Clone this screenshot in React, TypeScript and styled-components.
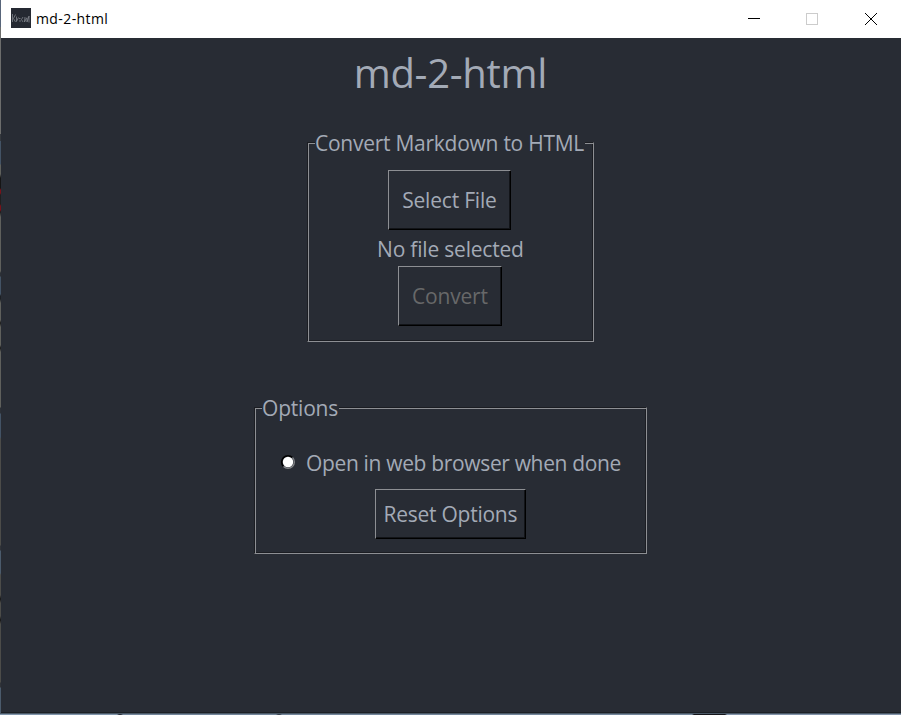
import React from "react";
import styled, { createGlobalStyle } from "styled-components";

const ink = "#a3aab6";
const light = "#8d8f93";
const shade = "#1b1d22";

const GlobalStyle = createGlobalStyle`
  * { box-sizing: border-box; }
  body { margin: 0; background: #282c34; overflow: hidden; }
`;

const Screen = styled.div`
  display: grid;
  grid-template-columns: 1px 900px;
  grid-template-rows: 713px 2px;
  width: 901px;
  height: 715px;
  font-family: "Open Sans", "Noto Sans", sans-serif;
`;

const LeftSliver = styled.div`
  background: linear-gradient(
    #58657a 0 27px, #6c6d6c 27px 134px, #35393e 134px 141px, #435365 141px 164px,
    #5f605c 165px 174px, #151515 178px 188px, #7a1119 190px 193px, #202020 195px 204px,
    #7a1119 206px 210px, #1b1b1b 212px, #5f605c 217px 271px, #2c3036 273px 276px,
    #435365 277px 294px, #1d2024 296px 299px, #5f605c 303px 320px, #181818 323px,
    #5f605c 327px 345px, #181818 348px, #5f605c 352px 407px, #2c3036 408px 413px,
    #435365 414px 437px, #4c4c49 439px 545px, #303338 546px 550px, #4b5b6c 551px 573px,
    #4c4c49 575px 595px, #151515 599px, #4c4c49 603px 616px, #151515 620px,
    #4c4c49 624px 682px, #303338 683px 687px, #4b5b6c 688px
  );
`;

const BottomSliver = styled.div`
  grid-column: 1 / 3;
  border-top: 1px solid #4b5967;
  background: linear-gradient(
    90deg, #8095ab 0 117px, #2a303b 119px 121px, #73869b 123px 276px,
    #38424e 278px 280px, #73869b 282px 692px, #15161b 694px 725px, #8293a9 727px
  );
`;

const Window = styled.div`
  display: flex;
  flex-direction: column;
  background: #282c34;
  border-bottom: 1px solid #1c2025;
`;

const TitleBar = styled.header`
  display: flex;
  align-items: center;
  height: 38px;
  padding-left: 10px;
  background: #fff;
  color: #000;
`;

const AppIcon = styled.svg`
  width: 20px;
  height: 20px;
  margin: 0 5px 2px 0;
`;

const WindowName = styled.span`
  flex: 1;
  font-size: 14px;
  line-height: 20px;
  letter-spacing: 0.4px;
`;

const WindowControls = styled.svg`
  width: 171px;
  height: 38px;
`;

const Content = styled.main`
  display: flex;
  flex-direction: column;
  align-items: center;
  width: 899px;
  color: ${ink};
`;

const Text = styled.span<{ $track?: number }>`
  letter-spacing: ${(p) => p.$track ?? 0}px;
  margin-right: ${(p) => -(p.$track ?? 0)}px;
  white-space: nowrap;
`;

const Heading = styled.h1`
  margin: 7px 0 0;
  height: 56px;
  font-size: 40px;
  font-weight: 400;
  line-height: 56px;
`;

const Group = styled.section<{ $width: number; $height: number; $top: number }>`
  display: flex;
  flex-direction: column;
  align-items: center;
  width: ${(p) => p.$width}px;
  height: ${(p) => p.$height}px;
  margin-top: ${(p) => p.$top}px;
  border: 1px solid;
  border-color: ${shade} ${light} ${light} ${shade};
  box-shadow: inset 1px 1px ${light}, inset -1px -1px ${shade};
  font-size: 21px;
  line-height: 28px;
`;

const Legend = styled.div`
  align-self: flex-start;
  height: 28px;
  margin: -14px 0 0 7px;
  padding: 0 1px 0 0;
  background: #282c34;
`;

const Button = styled.button<{ $width: number; $height: number; $top: number; $right?: number }>`
  width: ${(p) => p.$width}px;
  height: ${(p) => p.$height}px;
  margin: ${(p) => p.$top}px ${(p) => p.$right ?? 0}px 0 0;
  padding: 0;
  flex: none;
  border: 1px solid;
  border-color: ${light} #000 #000 ${light};
  box-shadow: inset -1px -1px #121418;
  background: transparent;
  color: ${ink};
  font: inherit;
  &:disabled { color: #676869; }
`;

const Status = styled.div`
  height: 28px;
  margin-top: 5px;
`;

const RadioRow = styled.label`
  display: flex;
  align-items: center;
  align-self: flex-start;
  height: 28px;
  margin: 27px 0 0 25px;
`;

const RadioMark = styled.svg`
  width: 16px;
  height: 16px;
  margin: 0 10px 3px 0;
`;

export default function App() {
  return (
    <Screen>
      <GlobalStyle />
      <LeftSliver />
      <Window>
        <TitleBar>
          <AppIcon viewBox="0 0 20 20">
            <rect width="20" height="20" fill="#252932" />
            <path
              d="M1.500 6v8M4.500 6.500l-2 4 2 3.500M5.500 8.500v5l2-4M8 10.500h1.500M8 13h2M12 9l-1.500 2.500 1.500 2.500M14 9l-.5 5 2-4M16 9.500v4.500l2-6v6.500"
              fill="none" stroke="#8d9198" strokeWidth=".7"
            />
          </AppIcon>
          <WindowName>md-2-html</WindowName>
          <WindowControls viewBox="0 0 171 38" shapeRendering="crispEdges">
            <path d="M18 18.500h12" stroke="#000" />
            <rect x="76.500" y="13.500" width="11" height="11" fill="none" stroke="#ccc" />
            <path d="M135 13l12 12M147 13l-12 12" stroke="#000" shapeRendering="auto" />
          </WindowControls>
        </TitleBar>
        <Content>
          <Heading><Text $track={-0.3}>md-2-html</Text></Heading>
          <Group $width={287} $height={200} $top={41}>
            <Legend><Text $track={-0.26}>Convert Markdown to HTML</Text></Legend>
            <Button $width={123} $height={60} $top={13} $right={2}><Text $track={-0.2}>Select File</Text></Button>
            <Status><Text $track={-0.2}>No file selected</Text></Status>
            <Button $width={104} $height={60} $top={3} $right={1} disabled><Text $track={-0.2}>Convert</Text></Button>
          </Group>
          <Group $width={393} $height={147} $top={65}>
            <Legend><Text $track={-0.2}>Options</Text></Legend>
            <RadioRow>
              <RadioMark viewBox="0 0 16 16">
                <path d="M3.500 12.500A6.300 6.300 0 0 1 12.500 3.500" fill="none" stroke="#000" strokeWidth="1.500" />
                <path d="M12.500 3.500A6.300 6.300 0 0 1 3.500 12.500" fill="none" stroke="#85878a" strokeWidth="1.300" />
                <circle cx="8" cy="8" r="5.200" fill="#fff" />
              </RadioMark>
              <Text $track={-0.34}>Open in web browser when done</Text>
            </RadioRow>
            <Button $width={151} $height={50} $top={12}><Text $track={-0.25}>Reset Options</Text></Button>
          </Group>
        </Content>
      </Window>
      <BottomSliver />
    </Screen>
  );
}
